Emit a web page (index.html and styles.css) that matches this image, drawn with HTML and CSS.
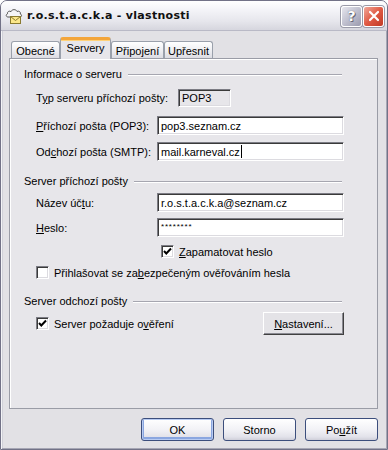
FILE: index.html
```html
<!DOCTYPE html>
<html>
<head>
<meta charset="utf-8">
<link rel="stylesheet" href="styles.css">
</head>
<body>
<div class="window">
  <div class="titlebar">
    <svg class="appicon" width="18" height="17" viewBox="0 0 18 17">
      <path d="M3 9 C1 9 0.5 6.5 2.5 5.8 C2 3.5 4.5 2.5 6 3.6 C7 1 11 1 12 3.4 C14 2.6 16 4 15.3 6 C17 6.4 17 9 15 9 Z" fill="#f4f4f6" stroke="#555" stroke-width="1"/>
      <rect x="5.5" y="8.5" width="10" height="7" fill="#fbe78a" stroke="#8a7a30" stroke-width="1"/>
      <path d="M5.5 8.5 L10.5 12.5 L15.5 8.5" fill="none" stroke="#8a7a30" stroke-width="1"/>
    </svg>
    <span class="title">r.o.s.t.a.c.k.a - vlastnosti</span>
    <div class="capbtns">
      <div class="capbtn help">?</div>
      <div class="capbtn close">
        <svg width="12" height="12" viewBox="0 0 12 12"><path d="M2 2 L10 10 M10 2 L2 10" stroke="#fff" stroke-width="2.2" stroke-linecap="round"/></svg>
      </div>
    </div>
  </div>

  <div class="content">
    <div class="tabs">
      <div class="tab t1">Obecné</div>
      <div class="tab active t2">Servery</div>
      <div class="tab t3">Připojení</div>
      <div class="tab t4">Upřesnit</div>
    </div>

    <div class="panel">
      <div class="group g1"><span>Informace o serveru</span><i class="etch"></i></div>
      <div class="row r-type">
        <span class="lbl">T<u>y</u>p serveru příchozí pošty:</span>
        <div class="field readonly">POP3</div>
      </div>
      <div class="row r-in">
        <span class="lbl"><u>P</u>říchozí pošta (POP3):</span>
        <div class="field">pop3.seznam.cz</div>
      </div>
      <div class="row r-out">
        <span class="lbl">Od<u>c</u>hozí pošta (SMTP):</span>
        <div class="field">mail.karneval.cz<span class="caret"></span></div>
      </div>

      <div class="group g2"><span>Server příchozí pošty</span><i class="etch"></i></div>
      <div class="row r-acc">
        <span class="lbl">Název úč<u>t</u>u:</span>
        <div class="field">r.o.s.t.a.c.k.a@seznam.cz</div>
      </div>
      <div class="row r-pwd">
        <span class="lbl"><u>H</u>eslo:</span>
        <div class="field pwd">********</div>
      </div>
      <div class="check r-remember">
        <span class="box"><svg width="11" height="11" viewBox="0 0 11 11"><path d="M2 5 L4.3 7.5 L9 2.5" fill="none" stroke="#000" stroke-width="2"/></svg></span>
        <span><u>Z</u>apamatovat heslo</span>
      </div>
      <div class="check r-spa">
        <span class="box"></span>
        <span>Přihlašovat se za<u>b</u>ezpečeným ověřováním hesla</span>
      </div>

      <div class="group g3"><span>Server odchozí pošty</span><i class="etch"></i></div>
      <div class="row r-auth">
        <div class="check">
          <span class="box"><svg width="11" height="11" viewBox="0 0 11 11"><path d="M2 5 L4.3 7.5 L9 2.5" fill="none" stroke="#000" stroke-width="2"/></svg></span>
          <span>Server požaduje o<u>v</u>ěření</span>
        </div>
        <div class="classicbtn"><u>N</u>astavení...</div>
      </div>
    </div>

    <div class="buttons">
      <div class="btn default">OK</div>
      <div class="btn">Storno</div>
      <div class="btn">Po<u>u</u>žít</div>
    </div>
  </div>
</div>
</body>
</html>
```

FILE: styles.css
```css
html, body {
  margin: 0;
  padding: 0;
  background: #ffffff;
}

body {
  font-family: "Liberation Sans", Arial, sans-serif;
  font-size: 11px;
  color: #000;
}

.window {
  width: 388px;
  height: 450px;
  box-sizing: border-box;
  border: 1px solid #727287;
  border-radius: 7px 7px 0 0;
  background: #e2e1e5;
  display: flex;
  flex-direction: column;
  box-shadow: inset 1px 0 0 #f4f4f7, inset -1px -1px 0 #a6a6b4, inset 2px 0 0 #d0d0d8;
  overflow: hidden;
}

.titlebar {
  height: 29px;
  flex: none;
  display: flex;
  align-items: center;
  padding: 0 3px 0 4px;
  background: linear-gradient(#ffffff 0%, #f4f4f8 30%, #e6e6ec 70%, #d6d6de 100%);
  border-bottom: 1px solid #b9b9c6;
}

.appicon {
  flex: none;
  margin-top: 1px;
}

.title {
  margin-left: 4px;
  font-family: "DejaVu Sans", sans-serif;
  font-weight: bold;
  font-size: 11px;
  letter-spacing: 0.3px;
  color: #111;
  flex: 1;
}

.capbtns {
  display: flex;
  gap: 1px;
  margin-top: 1px;
}

.capbtn {
  width: 19px;
  height: 19px;
  border: 1px solid #fff;
  border-radius: 3px;
  display: flex;
  align-items: center;
  justify-content: center;
  box-shadow: 0 0 0 1px #9a9aa8;
}

.help {
  background: linear-gradient(135deg, #e6e6ee 0%, #b8b8c8 60%, #9a9aae 100%);
  color: #ffffff;
  font-family: "DejaVu Sans", sans-serif;
  font-weight: bold;
  font-size: 14px;
  text-shadow: 0 0 1px #555, 1px 1px 0 #6a6a7c;
}

.close {
  background: linear-gradient(135deg, #f0a89a 0%, #e05a44 50%, #c13a24 100%);
}

.content {
  flex: 1;
  padding: 6px 9px 0 8px;
  display: flex;
  flex-direction: column;
}

.tabs {
  display: flex;
  align-items: flex-end;
  height: 21px;
  padding-left: 2px;
  position: relative;
  z-index: 2;
}

.tab {
  height: 17px;
  box-sizing: border-box;
  border: 1px solid #9aa0ab;
  border-bottom: none;
  border-radius: 3px 3px 0 0;
  background: linear-gradient(#ffffff, #ececf0 60%, #dcdce2);
  display: flex;
  align-items: center;
  justify-content: center;
  padding-top: 1px;
}

.t1 { width: 49px; }
.t2 { width: 51px; }
.t3 { width: 53px; }
.t4 { width: 49px; }

.tab.active {
  height: 22px;
  margin-bottom: -1px;
  background: #e7e6ea;
  border-top: 3px solid #f3a53a;
  box-shadow: inset 0 1px 0 #ffd27a;
  align-items: flex-start;
  padding-top: 2px;
}

.panel {
  height: 351px;
  box-sizing: border-box;
  border: 1px solid #9a9ca6;
  background: #e7e6ea;
  box-shadow: inset 1px 1px 0 #ffffff;
  padding: 8px 35px 0 14px;
  display: flex;
  flex-direction: column;
}

.group {
  display: flex;
  align-items: center;
  height: 13px;
  white-space: nowrap;
}

.etch {
  flex: 1;
  margin-left: 6px;
  margin-top: 2px;
  height: 1px;
  background: #a6a6b0;
  border-bottom: 1px solid #ffffff;
}

.g1 { margin-top: 0; }
.g2 { margin-top: 13px; }
.g3 { margin-top: 15px; }

.row {
  display: flex;
  align-items: center;
  height: 19px;
  padding-left: 12px;
}

.lbl {
  width: 121px;
  flex: none;
  white-space: nowrap;
}

.r-type { margin-top: 9px; height: 18px; }
.r-in { margin-top: 9px; }
.r-out { margin-top: 7px; }
.r-acc { margin-top: 6px; }
.r-pwd { margin-top: 6px; }

.field {
  flex: 1;
  height: 19px;
  box-sizing: border-box;
  border: 1px solid;
  border-color: #7c7c84 #ffffff #ffffff #7c7c84;
  box-shadow: inset 1px 1px 0 #3a3a3a, inset -1px -1px 0 #dcdbe0;
  background: #ffffff;
  padding: 0 3px;
  display: flex;
  align-items: center;
  margin-right: -2px;
  white-space: nowrap;
}

.readonly {
  flex: none;
  width: 53px;
  height: 18px;
  background: #e7e6ea;
  margin-left: 21px;
}

.pwd {
  font-size: 8px;
  align-items: flex-start;
  padding-top: 3px;
  letter-spacing: 0.8px;
}

.caret {
  display: inline-block;
  width: 1px;
  height: 13px;
  background: #000;
  margin-left: 1px;
}

.check {
  display: flex;
  align-items: center;
  gap: 5px;
  height: 13px;
  white-space: nowrap;
}

.box {
  width: 13px;
  height: 13px;
  box-sizing: border-box;
  border: 1px solid;
  border-color: #7c7c84 #ffffff #ffffff #7c7c84;
  box-shadow: inset 1px 1px 0 #3a3a3a, inset -1px -1px 0 #dcdbe0;
  background: #ffffff;
  display: flex;
  align-items: center;
  justify-content: center;
  flex: none;
}

.r-remember { margin-top: 8px; margin-left: 137px; }
.r-spa { margin-top: 8px; margin-left: 12px; }

.r-auth {
  margin-top: 5px;
  height: 23px;
  justify-content: space-between;
}

.classicbtn {
  width: 81px;
  height: 23px;
  box-sizing: border-box;
  border: 1px solid;
  border-color: #ffffff #404040 #404040 #ffffff;
  box-shadow: inset -1px -1px 0 #8a8a92;
  background: #e4e3e7;
  display: flex;
  align-items: center;
  justify-content: center;
  margin-right: -2px;
}

.buttons {
  display: flex;
  justify-content: flex-end;
  gap: 9px;
  margin-top: 9px;
}

.btn {
  width: 73px;
  height: 23px;
  box-sizing: border-box;
  border: 1px solid #3c4e7c;
  border-radius: 3px;
  background: linear-gradient(#ffffff 0%, #f2f2f6 50%, #e2e2ea 85%, #cfcfd9 100%);
  display: flex;
  align-items: center;
  justify-content: center;
}

.btn.default {
  box-shadow: inset 0 0 0 1px #b8cbf2, inset 0 -1px 0 2px #8aa6e0;
}

u {
  text-decoration: underline;
  text-underline-offset: 1px;
}
```
